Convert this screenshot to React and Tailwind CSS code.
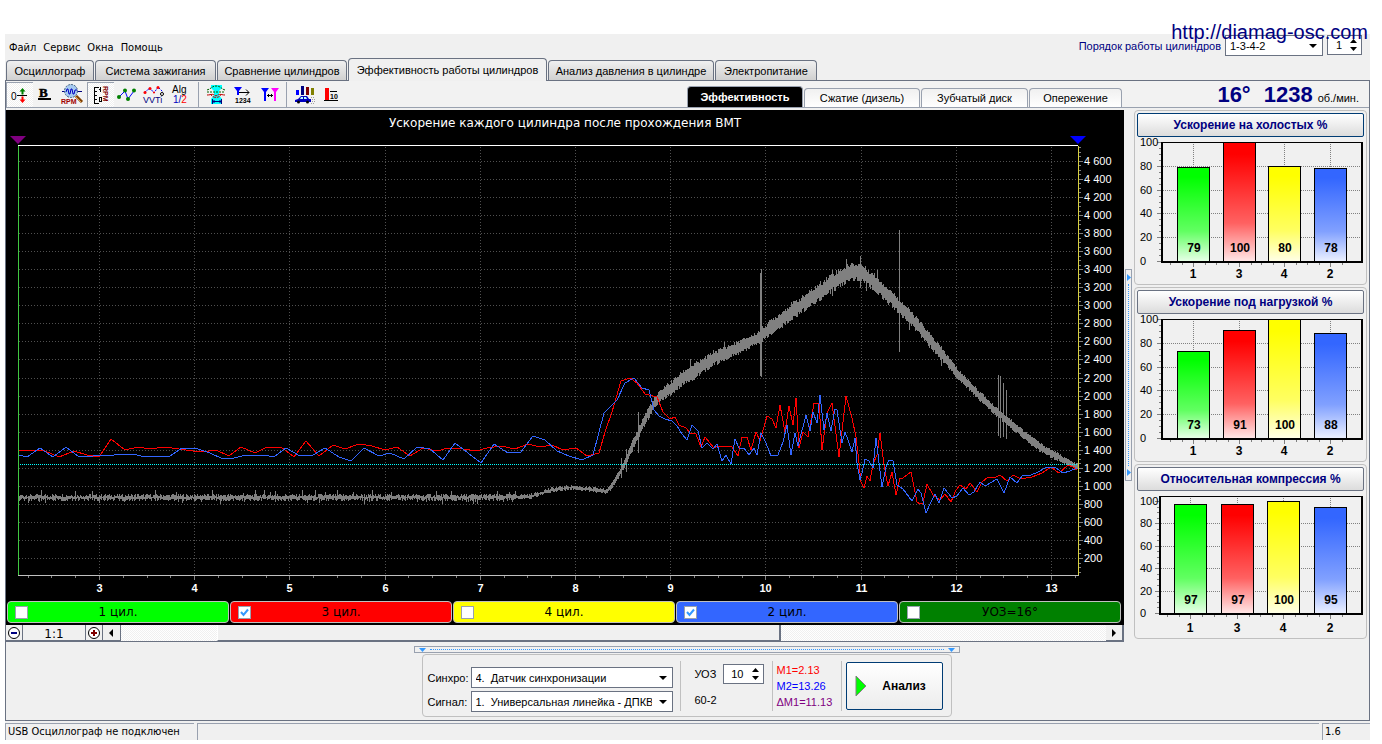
import React, { useState } from 'react';

const mainTabs = [
  { title: 'Осциллограф', width: 'w-[88px]' },
  { title: 'Система зажигания', width: 'w-[121px]' },
  { title: 'Сравнение цилиндров', width: 'w-[130px]' },
  { title: 'Эффективность работы цилиндров', width: 'w-[199px]' },
  { title: 'Анализ давления в цилиндре', width: 'w-[166px]' },
  { title: 'Электропитание', width: 'w-[102px]' },
];

const subTabs = [
  { title: 'Эффективность', width: 'w-[116px]' },
  { title: 'Сжатие (дизель)', width: 'w-[116px]' },
  { title: 'Зубчатый диск', width: 'w-[107px]' },
  { title: 'Опережение', width: 'w-[93px]' },
];

const legend = [
  { title: '1 цил.', color: 'bg-[#00ff00]', checked: false },
  { title: '3 цил.', color: 'bg-[#ff0000]', checked: true },
  { title: '4 цил.', color: 'bg-[#ffff00]', checked: false },
  { title: '2 цил.', color: 'bg-[#3366ff]', checked: true },
  { title: 'УОЗ=16°', color: 'bg-[#008000]', checked: false },
];

const barCharts = [
  {
    title: 'Ускорение на холостых %',
    focused: true,
    left: 26,
    bottom: 124,
    full: 119,
    frameTop: 5,
    bars: [
      { x: 42, value: 79, name: '1', color: '#00ff00' },
      { x: 88, value: 100, name: '3', color: '#ff0000' },
      { x: 133, value: 80, name: '4', color: '#ffff00' },
      { x: 179, value: 78, name: '2', color: '#3366ff' },
    ],
  },
  {
    title: 'Ускорение под нагрузкой %',
    left: 26,
    bottom: 124,
    full: 119,
    frameTop: 5,
    bars: [
      { x: 42, value: 73, name: '1', color: '#00ff00' },
      { x: 88, value: 91, name: '3', color: '#ff0000' },
      { x: 133, value: 100, name: '4', color: '#ffff00' },
      { x: 179, value: 88, name: '2', color: '#3366ff' },
    ],
  },
  {
    title: 'Относительная компрессия %',
    left: 24,
    bottom: 122,
    full: 112,
    frameTop: 5,
    bars: [
      { x: 39, value: 97, name: '1', color: '#00ff00' },
      { x: 86, value: 97, name: '3', color: '#ff0000' },
      { x: 132, value: 100, name: '4', color: '#ffff00' },
      { x: 179, value: 95, name: '2', color: '#3366ff' },
    ],
  },
];

const redLine =
  '19,450 36,450 45,451 59,457 74,451 87,455 99,457 111,439 125,450 138,447 150,449 164,447 179,449 193,451 203,452 216,450 229,456 241,447 255,453 267,447 281,447 294,457 306,441 319,456 333,445 345,449 359,444 372,446 385,450 397,447 410,456 423,448 437,451 448,448 463,449 476,451 487,448 501,446 515,449 528,444 540,447 552,445 563,450 576,448 587,456 599,453 605,432 612,412 621,381 630,378 637,383 645,394 657,397 663,412 670,419 675,417 679,425 686,428 690,433 696,434 701,447 705,437 714,448 718,446 732,447 738,456 742,437 747,437 751,450 756,432 760,441 767,416 772,419 776,428 780,405 785,432 789,406 793,425 796,398 799,448 803,432 808,437 811,420 814,403 819,403 822,450 827,413 832,403 839,457 846,396 852,418 856,437 859,463 861,482 864,488 867,476 870,481 873,464 877,455 880,433 884,465 888,486 892,472 896,495 900,478 903,478 911,472 917,502 920,504 923,503 927,484 933,495 940,500 945,494 951,502 956,490 960,485 966,489 970,483 977,492 982,482 988,477 994,478 1000,475 1007,481 1013,475 1021,479 1032,477 1042,473 1051,467 1059,473 1068,465 1073,467 1077,470';

const blueLine =
  '19,455 27,457 40,448 53,457 66,447 79,457 93,456 100,455 114,455 134,454 144,457 170,456 182,448 198,449 210,453 223,459 234,458 246,455 263,455 274,457 286,448 300,456 313,455 325,448 339,457 351,461 364,448 379,456 390,453 404,459 417,447 430,449 443,460 455,443 468,453 481,463 494,444 508,453 521,452 533,436 545,440 557,451 569,456 582,460 593,455 604,413 617,400 625,383 634,378 642,388 649,390 654,410 659,416 665,419 672,421 677,426 682,434 687,440 692,425 698,431 702,448 707,443 713,449 717,444 722,461 726,455 731,464 735,439 739,448 744,448 749,455 754,448 757,455 761,433 766,443 771,456 778,455 783,442 787,425 791,455 795,433 798,446 806,415 810,431 813,412 817,423 820,395 824,430 827,413 831,431 835,409 837,410 842,443 845,432 848,440 852,452 855,438 857,463 860,480 862,473 865,459 869,461 873,468 876,438 882,487 886,467 889,460 893,461 897,485 903,489 912,501 918,489 921,493 926,513 930,504 935,494 939,503 944,488 952,498 957,496 963,488 969,495 974,492 980,482 985,486 997,479 1004,493 1010,477 1017,483 1023,475 1031,475 1038,472 1047,467 1055,467 1063,473 1070,471 1077,468';

// x, centre of the rpm band, half of its height
const rpmBand = [
  [19, 497, 4], [500, 497, 4], [530, 496, 3], [545, 491, 3], [560, 488, 3], [575, 487, 3],
  [590, 489, 3], [600, 490, 3], [605, 491, 3], [611, 486, 3], [620, 471, 4], [630, 450, 5],
  [637, 435, 6], [643, 422, 6], [650, 409, 6], [657, 399, 6], [665, 391, 7], [670, 388, 7],
  [682, 378, 8], [690, 373, 9], [700, 367, 8], [713, 358, 8], [727, 352, 7], [740, 346, 7],
  [757, 338, 7], [765, 331, 8], [790, 312, 9], [810, 298, 9], [830, 283, 10], [850, 271, 9],
  [860, 271, 9], [873, 281, 9], [890, 297, 9], [907, 314, 8], [923, 332, 8], [940, 352, 7],
  [957, 373, 6], [973, 389, 5], [990, 406, 5], [1007, 420, 5], [1023, 434, 5], [1040, 447, 5],
  [1057, 456, 4], [1073, 465, 3], [1078, 466, 3],
];

const rpmSpikes = [
  [621, 458, 478], [626, 449, 472], [638, 412, 453], [690, 359, 380], [724, 342, 360],
  [760, 273, 376], [761, 269, 377], [832, 270, 296], [846, 259, 280], [860, 256, 288],
  [866, 270, 291], [877, 270, 292], [899, 230, 352], [909, 310, 330], [941, 350, 366],
  [998, 375, 436], [1000, 376, 438], [1003, 383, 437], [1006, 390, 439],
];

const noise = (n) => {
  const s = Math.sin(n * 12.9898) * 43758.5453;
  return s - Math.floor(s);
};

const rpmPath = () => {
  let d = '';
  let k = 0;
  for (let x = 19; x < 1078; x++) {
    while (rpmBand[k + 1][0] <= x) k++;
    const [x0, y0, h0] = rpmBand[k];
    const [x1, y1, h1] = rpmBand[k + 1];
    const t = (x - x0) / (x1 - x0);
    const y = y0 + (y1 - y0) * t;
    const h = h0 + (h1 - h0) * t;
    // the idle part is a thin ragged line, the rest is a filled band
    const base = x < 610 ? 0 : 0.45;
    const spread = x < 610 ? 0.8 : 0.55;
    let up = h * (base + noise(x) * spread);
    let down = h * (base + noise(x + 5000) * spread);
    if (x < 530 && noise(x + 900) > 0.96) up += 4;
    if (x < 530 && noise(x + 1700) > 0.94) down += 3;
    d += `M${x}.5 ${Math.round(y - up)}V${Math.round(y + down) + 1}`;
  }
  rpmSpikes.forEach(([x, a, b]) => {
    d += `M${x}.5 ${a}V${b}`;
  });
  return d;
};

const scopeX = (n) => Math.round(99 + (n - 3) * 95.2) + 0.5;
const scopeY = (rpm) => Math.round(558 - ((rpm - 200) / 200) * 18.05) + 0.5;

function ScopeChart() {
  const seconds = [3, 4, 5, 6, 7, 8, 9, 10, 11, 12, 13];
  const rpms = Array.from({ length: 23 }, (_, i) => (i + 1) * 200);
  const minorX = Array.from({ length: 45 }, (_, i) => 2.25 + i * 0.25);
  const minorY = Array.from({ length: 95 }, (_, i) => 50 + i * 50);

  return (
    <svg viewBox="6 110 1118 490" className="block w-full h-auto" role="img" aria-label="График ускорения">
      <text x="565" y="127" fill="#fff" fontSize="12" textAnchor="middle" className="font-['DejaVu_Sans',sans-serif]">
        Ускорение каждого цилиндра после прохождения ВМТ
      </text>
      <g shapeRendering="crispEdges" fill="none">
        <g stroke="#505050" strokeDasharray="1 2">
          {rpms.map((r) => (
            <path key={r} d={`M19 ${scopeY(r)}H1078`} />
          ))}
        </g>
        <g stroke="#505050" strokeDasharray="1 2">
          {seconds.map((s) => (
            <path key={s} d={`M${scopeX(s)} 147V575`} />
          ))}
        </g>
        <path d={rpmPath()} stroke="#808080" />
        <polyline points={redLine} stroke="#ff0000" />
        <polyline points={blueLine} stroke="#3366ff" />
        <path d="M18 464.5H1078" stroke="#00ffff" strokeDasharray="1 1" />
        <path d="M18 145.5H1078" stroke="#fff" />
        <path d="M18 575.5H1079" stroke="#c0c0c0" />
        <path d="M18.5 146V575" stroke="#40c840" />
        <path d="M1078.5 146V575" stroke="#d8d040" />
        <g stroke="#808080">
          {minorX.map((s) => (
            <path key={s} d={`M${scopeX(s)} 576v${s % 1 === 0 ? 4 : 2}`} />
          ))}
          {minorY.map((r) => (
            <path key={r} d={`M1079 ${scopeY(r)}h${r % 200 === 0 ? 4 : 2}`} />
          ))}
        </g>
      </g>
      <path d="M10 136h16l-8 8z" fill="#800080" />
      <path d="M1070 136h16l-8 8z" fill="#0000ff" />
      <g fill="#fff" fontSize="11" className="font-['Liberation_Sans',sans-serif]">
        {rpms.map((r) => (
          <text key={r} x="1084" y={scopeY(r) + 3.5}>
            {r >= 1000 ? Math.floor(r / 1000) + ' ' + String(r % 1000).padStart(3, '0') : r}
          </text>
        ))}
        {seconds.map((s) => (
          <text key={s} x={scopeX(s)} y="592" textAnchor="middle" fontWeight="bold">
            {s}
          </text>
        ))}
      </g>
    </svg>
  );
}

function BarChart({ chart, id }) {
  const { left, bottom, full, frameTop, bars } = chart;
  const y = (v) => Math.round(bottom - (v / 100) * full) + 0.5;

  return (
    <svg viewBox="0 0 231 147" className="block w-full h-auto" role="img" aria-label={chart.title}>
      <defs>
        {bars.map((bar) => (
          <linearGradient key={bar.name} id={`bar-${id}-${bar.name}`} x1="0" y1="0" x2="0" y2="1">
            <stop offset="0.1" stopColor={bar.color} />
            <stop offset="0.68" stopColor={bar.color} stopOpacity="0.62" />
            <stop offset="1" stopColor={bar.color} stopOpacity="0.1" />
          </linearGradient>
        ))}
      </defs>
      <g shapeRendering="crispEdges">
        <g stroke="#808080" strokeDasharray="1 1">
          {[20, 40, 60, 80].map((v) => (
            <path key={v} d={`M${left} ${y(v)}H227`} />
          ))}
          {bars.map((bar) => (
            <path key={bar.name} d={`M${bar.x + 16}.5 ${frameTop}V${bottom}`} />
          ))}
        </g>
        <g stroke="#808080">
          {[0, 20, 40, 60, 80, 100].map((v) => (
            <path key={v} d={`M${left - 4} ${y(v)}h4`} />
          ))}
          {[5, 10, 15, 25, 30, 35, 45, 50, 55, 65, 70, 75, 85, 90, 95].map((v) => (
            <path key={v} d={`M${left - 2} ${y(v)}h2`} />
          ))}
          {bars.map((bar) => (
            <path
              key={bar.name}
              d={`M${bar.x + 16}.5 ${bottom + 2}v4M${bar.x - 7}.5 ${bottom + 2}v2M${bar.x + 5}.5 ${bottom + 2}v2M${bar.x + 28}.5 ${bottom + 2}v2`}
            />
          ))}
        </g>
        <path d={`M${left} ${frameTop}.5H228`} stroke="#000" />
        <path d={`M${left + 1} ${frameTop}V${bottom}M227 ${frameTop}V${bottom}M${left} ${bottom + 1}H228`} stroke="#000" strokeWidth="2" />
        {bars.map((bar) => (
          <g key={bar.name}>
            <rect x={bar.x} y={y(bar.value) - 0.5} width="33" height={bottom - y(bar.value) + 0.5} fill="#fff" />
            <rect
              x={bar.x + 0.5}
              y={y(bar.value)}
              width="32"
              height={bottom - y(bar.value)}
              fill={`url(#bar-${id}-${bar.name})`}
              stroke="#000"
            />
          </g>
        ))}
      </g>
      <g className="font-['Liberation_Sans',sans-serif]" fill="#000">
        {[0, 20, 40, 60, 80, 100].map((v) => (
          <text key={v} x="5" y={y(v) + 3.5} fontSize="11">
            {v}
          </text>
        ))}
        {bars.map((bar) => (
          <g key={bar.name} fontSize="12" fontWeight="bold" textAnchor="middle">
            <text x={bar.x + 17} y={bottom - 9}>
              {bar.value}
            </text>
            <text x={bar.x + 16} y="141">
              {bar.name}
            </text>
          </g>
        ))}
      </g>
    </svg>
  );
}

const sans = "font-['Liberation_Sans',sans-serif]";

const tools = [
  {
    title: 'Смещение нуля',
    pressed: true,
    icon: (
      <>
        <text x="4" y="17" fontSize="10" className={sans}>0</text>
        <path d="M10 12.500h10" stroke="#000" />
        <path d="M15.500 5l3 3.500h-2v3h-2v-3h-2z" fill="#008000" />
        <path d="M15.500 20l3-3.500h-2v-3h-2v3h-2z" fill="#f00" />
      </>
    ),
  },
  {
    title: 'Жирные линии',
    icon: (
      <>
        <text x="6" y="15" fontSize="13" fontWeight="bold" stroke="#000" strokeWidth="0.5" className="font-['Liberation_Serif',serif]">B</text>
        <path d="M5 17h13" stroke="#000" strokeWidth="2" />
      </>
    ),
  },
  {
    title: 'Масштаб RPM',
    icon: (
      <>
        <path d="M2 9.500h20" stroke="#000080" />
        <path d="M16 14l6 6" stroke="#804000" strokeWidth="3" />
        <path d="M15 14l6 6" stroke="#e0a050" />
        <circle cx="11" cy="9" r="6.500" fill="#a6caf0" stroke="#406080" strokeDasharray="2 1" />
        <path d="M6 10l1-3h1l1 5h1l1-5h1l1 5h1l1-4h2" fill="none" stroke="#0000c0" />
        <text x="1" y="22" fontSize="7" fontWeight="bold" fill="#a00000" className={sans}>RPM</text>
      </>
    ),
  },
  {
    title: 'Шкала RPM',
    pressed: true,
    icon: (
      <>
        <g fill="none" stroke="#000" shapeRendering="crispEdges">
          <path d="M11 4.500H6.500v16H11M7 8.500h2M7 12.500h2M7 16.500h2" />
          <path d="M11 6.500h1.500M12.500 4v5" />
          <rect x="11.500" y="14.500" width="2" height="4" />
        </g>
        <text transform="translate(15 3) rotate(90)" fontSize="7" fontWeight="bold" fill="#800000" className={sans}>RPM</text>
      </>
    ),
  },
  {
    title: 'Точки',
    icon: (
      <>
        <path d="M5 15l6-6 3 8 6-8" fill="none" stroke="#0000ff" />
        <g fill="#008000">
          <circle cx="5" cy="15" r="2" />
          <circle cx="11" cy="8.500" r="2" />
          <circle cx="14" cy="17" r="2" />
          <circle cx="20" cy="8.500" r="2" />
        </g>
      </>
    ),
  },
  {
    title: 'VVTi',
    icon: (
      <>
        <path d="M4 10l5-4 4 5 4-6 5 5" fill="none" stroke="#0000ff" strokeDasharray="2 1" />
        <g fill="#f00">
          <circle cx="4" cy="10.500" r="1.500" />
          <circle cx="9" cy="6.500" r="1.500" />
          <circle cx="17" cy="5.500" r="1.500" />
          <circle cx="13" cy="10.500" r="1" />
        </g>
        <circle cx="21" cy="12" r="1.500" fill="#fff" stroke="#000" />
        <text x="2" y="21" fontSize="9" fill="#000080" className={sans}>VVTi</text>
      </>
    ),
  },
  {
    title: 'Алгоритм 1/2',
    icon: (
      <>
        <text x="4" y="11" fontSize="10" className={sans}>Alg</text>
        <text x="5" y="21" fontSize="10" fill="#0000c0" className={sans}>
          1/<tspan fill="#f00">2</tspan>
        </text>
      </>
    ),
  },
  {
    title: 'Фазы',
    split: true,
    icon: (
      <>
        <path d="M9 3h11v3l-3 3v4l3 4v5H9v-5l3-4V9L9 6z" fill="#00ffff" />
        <path d="M5 8c4-1 5-4 9-4 5 0 5 3 9 4M5 10h18" fill="none" stroke="#006000" strokeDasharray="2 1" />
        <path d="M5 13c5 0 5-2 9 1 4-3 5-1 9-1M8 12q6 7 12 0" fill="none" stroke="#c00000" strokeDasharray="3 1" />
        <path d="M10.500 17v5M19.500 17v5M10 19.500h10M12 18v3M18 18v3" stroke="#000080" />
      </>
    ),
  },
  {
    title: 'Порядок 1234',
    icon: (
      <>
        <path d="M5 5h8l-3 4v4H8V9z" fill="#0000ff" />
        <path d="M9 12.500M10 10.500h10M17 7.500l3 3-3 3" fill="none" stroke="#000" />
        <text x="6" y="21" fontSize="7" fontWeight="bold" className={sans}>1234</text>
      </>
    ),
  },
  {
    title: 'Между метками',
    icon: (
      <>
        <path d="M5 6h8l-3 4v9H8v-9z" fill="#0000ff" />
        <path d="M15 6h8l-3 4v9h-2v-9z" fill="#ff00ff" />
        <path d="M11 13.500h6M12.500 12v3M15.500 12v3" stroke="#000" />
      </>
    ),
  },
  {
    title: 'Авто',
    split: true,
    icon: (
      <>
        <path d="M6 8h3v5H6z" fill="#0000ff" />
        <path d="M11 4h3v9h-3z" fill="#000080" />
        <path d="M16 5h3v8h-3z" fill="#800000" />
        <path d="M21 6h3v7h-3z" fill="#808000" />
        <path d="M5 18l3-1 3-3h6l2 3h2v3H5z" fill="#0000c0" />
        <path d="M11 15h2v2h-3zM14 15h2l1 2h-3z" fill="#c0ffff" />
        <circle cx="8.500" cy="20" r="1.500" />
        <circle cx="17.500" cy="20" r="1.500" />
        <path d="M21 15.500h4M22 17.500h4M22 19.500h4M21 21.500h3" stroke="#a0a0a0" strokeDasharray="1 1" />
      </>
    ),
  },
  {
    title: 'Столбец 10',
    icon: (
      <>
        <path d="M8 6h4v12H8z" fill="#f00" />
        <path d="M7 18.500h14M13 9.500h7" stroke="#000" />
        <text x="13" y="17" fontSize="7" fontWeight="bold" className={sans}>10</text>
      </>
    ),
  },
];

function Stepper({ id, value, label, width }) {
  const [count, setCount] = useState(value);
  return (
    <div className={'flex h-[20px] items-center border border-gray-500 bg-white ' + width}>
      <input
        id={id}
        type="text"
        aria-label={label}
        value={count}
        onChange={(e) => setCount(Number(e.target.value) || 0)}
        className="w-0 grow bg-transparent pr-1 text-right text-[11px] outline-none"
      />
      <div className="flex flex-col gap-1 px-1">
        <button type="button" aria-label="Больше" onClick={() => setCount(count + 1)}>
          <svg width="7" height="4" className="block"><path d="M0 4l3.500-4L7 4z" /></svg>
        </button>
        <button type="button" aria-label="Меньше" onClick={() => setCount(count - 1)}>
          <svg width="7" height="4" className="block"><path d="M0 0l3.500 4L7 0z" /></svg>
        </button>
      </div>
    </div>
  );
}

function DropDown({ id, options, width }) {
  return (
    <div className={'relative h-[21px] ' + width}>
      <select
        id={id}
        className="block h-full w-full appearance-none border border-gray-500 bg-white pr-5 pl-1 text-[11px] outline-none"
      >
        {options.map((option) => (
          <option key={option}>{option}</option>
        ))}
      </select>
      <svg width="8" height="4" className="pointer-events-none absolute top-[9px] right-[6px]">
        <path d="M0 0h8L4 4z" />
      </svg>
    </div>
  );
}

export default function App() {
  const [tab, setTab] = useState(3);
  const [subTab, setSubTab] = useState(0);
  const [shown, setShown] = useState(legend.map((item) => item.checked));

  const toggle = (i) => setShown(shown.map((s, k) => (k === i ? !s : s)));

  return (
    <main className="min-h-screen bg-white pt-[34px] pr-3 pl-[5px] font-['Liberation_Sans',sans-serif] text-[11px] leading-4 text-black">
      <div className="relative bg-[#f0f0f0]">
        <a
          href="http://diamag-osc.com"
          className="absolute -top-[14px] right-[2px] z-10 text-[20px] leading-6 text-[#000080]"
        >
          http://diamag-osc.com
        </a>

        <div className="flex justify-between">
          <div>
            <nav className="flex h-6 items-center gap-[7px] pt-[3px] pl-1 font-['DejaVu_Sans_Condensed','DejaVu_Sans',sans-serif]">
              <button type="button">Файл</button>
              <button type="button">Сервис</button>
              <button type="button">Окна</button>
              <button type="button">Помощь</button>
            </nav>
            <div className="flex h-[22px] items-end gap-px pl-px">
              {mainTabs.map((item, i) => (
                <button
                  key={item.title}
                  type="button"
                  onClick={() => setTab(i)}
                  className={
                    'shrink-0 rounded-t border border-b-0 border-gray-500 whitespace-nowrap ' +
                    item.width +
                    (tab === i
                      ? ' z-10 -mb-px h-[23px] bg-[#f0f0f0]'
                      : ' h-5 bg-gradient-to-b from-[#f0f0f0] to-[#d0d0d0]')
                  }
                >
                  {item.title}
                </button>
              ))}
            </div>
          </div>
          <div className="flex items-start gap-1 pt-px pr-2">
            <label htmlFor="order" className="pt-[3px] text-[#000080]">
              Порядок работы цилиндров
            </label>
            <DropDown id="order" options={['1-3-4-2', '1-2-4-3']} width="w-[98px]" />
            <Stepper id="first" label="Первый цилиндр" value={1} width="w-[35px]" />
          </div>
        </div>

        <section className="border border-gray-500">
          <div className="flex h-[27px] border-b border-gray-400 bg-[#f2f2f2]">
            <div className="flex pt-px">
              {tools.map((tool) => (
                <React.Fragment key={tool.title}>
                  {tool.split && <div className="mx-[3px] w-px bg-gray-400" />}
                  <button
                    type="button"
                    aria-label={tool.title}
                    className={
                      'w-[27px] ' +
                      (tool.pressed
                        ? 'border-t border-l border-gray-400 bg-[repeating-conic-gradient(#fff_0_25%,#f0f0f0_0_50%)] bg-[length:2px_2px]'
                        : '')
                    }
                  >
                    <svg width="26" height="25" viewBox="0 0 26 25" className="block">
                      {tool.icon}
                    </svg>
                  </button>
                </React.Fragment>
              ))}
            </div>
            <div className="ml-auto flex items-end gap-px">
              {subTabs.map((item, i) => (
                <button
                  key={item.title}
                  type="button"
                  onClick={() => setSubTab(i)}
                  className={
                    'rounded-t border border-b-0 whitespace-nowrap ' +
                    item.width +
                    (subTab === i
                      ? ' h-[21px] border-gray-400 bg-black font-bold text-white'
                      : ' h-[19px] border-gray-400 bg-gradient-to-b from-[#f0f0f0] to-white')
                  }
                >
                  {item.title}
                </button>
              ))}
            </div>
            <div className="flex w-[247px] items-baseline justify-end gap-[5px] pr-[10px] text-[#000080]">
              <span className="pr-2 text-[22px] leading-7 font-bold">16°</span>
              <span className="text-[22px] leading-7 font-bold">1238</span>
              <span className="text-black">об./мин.</span>
            </div>
          </div>

          <div className="flex pt-[2px] pr-[2px]">
            <div className="min-w-0 grow">
              <div className="bg-black pb-[2px]">
                <ScopeChart />
                <div className="grid grid-cols-5 gap-px pt-px pr-[3px] pl-px">
                  {legend.map((item, i) => (
                    <label
                      key={item.title}
                      className={
                        "relative flex h-[22px] items-center justify-center rounded border border-[#c0c0c0] font-['DejaVu_Sans',sans-serif] text-[12px] " +
                        item.color
                      }
                    >
                      <input
                        type="checkbox"
                        checked={shown[i]}
                        onChange={() => toggle(i)}
                        className="absolute left-[7px] size-[13px] appearance-none border border-gray-400 bg-white"
                      />
                      {shown[i] && (
                        <svg width="13" height="13" className="pointer-events-none absolute left-[7px]">
                          <path d="M3 6l2.500 3L10 3.500" fill="none" stroke="#3399ff" strokeWidth="2" />
                        </svg>
                      )}
                      {item.title}
                    </label>
                  ))}
                </div>
              </div>
              <div className="flex h-[17px] border-r border-b border-gray-500">
                <button type="button" aria-label="Уменьшить" className="w-[17px] border-r border-b border-gray-500">
                  <svg width="16" height="16" className="block">
                    <circle cx="8" cy="8" r="5.500" fill="#fff" stroke="#000" />
                    <path d="M5 8h6" stroke="#000080" strokeWidth="2" />
                  </svg>
                </button>
                <div className="w-[63px] border-r border-b border-gray-500 text-center font-['DejaVu_Sans',sans-serif] text-[12px] leading-[19px]">
                  1:1
                </div>
                <button type="button" aria-label="Увеличить" className="w-[17px] border-r border-b border-gray-500">
                  <svg width="16" height="16" className="block">
                    <circle cx="8" cy="8" r="5.500" fill="#fff" stroke="#000" />
                    <path d="M5 8h6M8 5v6" stroke="#800000" strokeWidth="2" />
                  </svg>
                </button>
                <button type="button" aria-label="Влево" className="w-[18px] border-r border-b border-gray-500">
                  <svg width="17" height="16" className="block"><path d="M10 4v8L6 8z" /></svg>
                </button>
                <div className="grow bg-[repeating-conic-gradient(#fff_0_25%,#f0f0f0_0_50%)] bg-[length:2px_2px]">
                  <div
                    className="h-full border-r-2 border-b border-l border-gray-500 border-l-white bg-[#f0f0f0]"
                    style={{ marginLeft: '9.7%', width: '57.3%' }}
                  />
                </div>
                <button type="button" aria-label="Вправо" className="w-[17px] border-r border-b border-gray-500">
                  <svg width="16" height="16" className="block"><path d="M6 4v8l4-4z" /></svg>
                </button>
              </div>
            </div>

            <div className="flex w-[10px] shrink-0 items-start pt-[159px] pl-px">
              <div className="flex h-[212px] w-[7px] flex-col items-center justify-between border border-gray-400 py-1">
                <svg width="4" height="7"><path d="M0 0v7l4-3.500z" fill="#3399ff" /></svg>
                <div className="h-[182px] border-l border-dotted border-[#3399ff]" />
                <svg width="4" height="7"><path d="M0 0v7l4-3.500z" fill="#3399ff" /></svg>
              </div>
            </div>

            <div className="flex w-[233px] shrink-0 flex-col gap-[2px]">
              {barCharts.map((chart, i) => (
                <div key={chart.title} className="h-[175px] rounded border border-[#c0c0c0] pt-[2px]">
                  <div className="px-[2px]">
                    <button
                      type="button"
                      className={
                        'block h-6 w-full rounded-xs border bg-gradient-to-b from-white to-[#dcdcdc] text-[12px] font-bold text-[#000080] ' +
                        (chart.focused ? 'border-[#003c74]' : 'border-gray-500')
                      }
                    >
                      {chart.title}
                    </button>
                  </div>
                  <BarChart chart={chart} id={i} />
                </div>
              ))}
            </div>
          </div>

          <div className="mt-1 flex flex-col items-center pr-[2px] pb-[3px]">
            <div className="flex h-[7px] w-[546px] items-center justify-between border border-gray-400 px-1">
              <svg width="7" height="4"><path d="M0 0h7L3.500 4z" fill="#3399ff" /></svg>
              <div className="w-[514px] border-t border-dotted border-[#3399ff]" />
              <svg width="7" height="4"><path d="M0 0h7L3.500 4z" fill="#3399ff" /></svg>
            </div>
            <div className="mt-px flex h-[63px] w-[530px] items-center rounded border border-[#c0c0c0] pl-[5px]">
              <div className="grid grid-cols-[43px_202px] items-center gap-y-[3px] pt-2">
                <label htmlFor="sync">Синхро:</label>
                <DropDown id="sync" options={['4.\u00a0\u00a0Датчик синхронизации']} width="w-full" />
                <label htmlFor="signal">Сигнал:</label>
                <DropDown id="signal" options={['1.\u00a0\u00a0Универсальная линейка - ДПКВ']} width="w-full" />
              </div>
              <div className="ml-[7px] h-[50px] w-px bg-[#c0c0c0]" />
              <div className="flex w-[91px] flex-col gap-2 pl-[14px]">
                <div className="flex items-center justify-between pr-2">
                  <label htmlFor="advance">УОЗ</label>
                  <Stepper id="advance" label="УОЗ" value={10} width="w-[41px]" />
                </div>
                <span>60-2</span>
              </div>
              <div className="h-[50px] w-px bg-[#c0c0c0]" />
              <div className="w-[68px] pl-1 whitespace-nowrap">
                <div className="text-[#ff0000]">M1=2.13</div>
                <div className="text-[#0000ff]">M2=13.26</div>
                <div className="text-[#800080]">ΔM1=11.13</div>
              </div>
              <div className="h-[50px] w-px bg-[#c0c0c0]" />
              <button
                type="button"
                className="ml-1 flex h-12 w-[97px] items-center rounded-xs border border-[#003c74] bg-gradient-to-b from-white to-[#ececec] pl-2 text-[12px] font-bold"
              >
                <svg width="12" height="20"><path d="M1 0v20l10-10z" fill="#00ff00" stroke="#808080" /></svg>
                <span className="grow text-center">Анализ</span>
              </button>
            </div>
          </div>
        </section>

        <footer className="mt-[2px] flex h-[17px] gap-[3px] font-['DejaVu_Sans_Condensed','DejaVu_Sans',sans-serif]">
          <div className="w-[189px] border-t border-l border-gray-400 pl-[2px] whitespace-nowrap">
            USB Осциллограф не подключен
          </div>
          <div className="grow border-t border-l border-gray-400" />
          <div className="w-[48px] border-t border-l border-gray-400 pl-[2px]">1.6</div>
        </footer>
      </div>
    </main>
  );
}
